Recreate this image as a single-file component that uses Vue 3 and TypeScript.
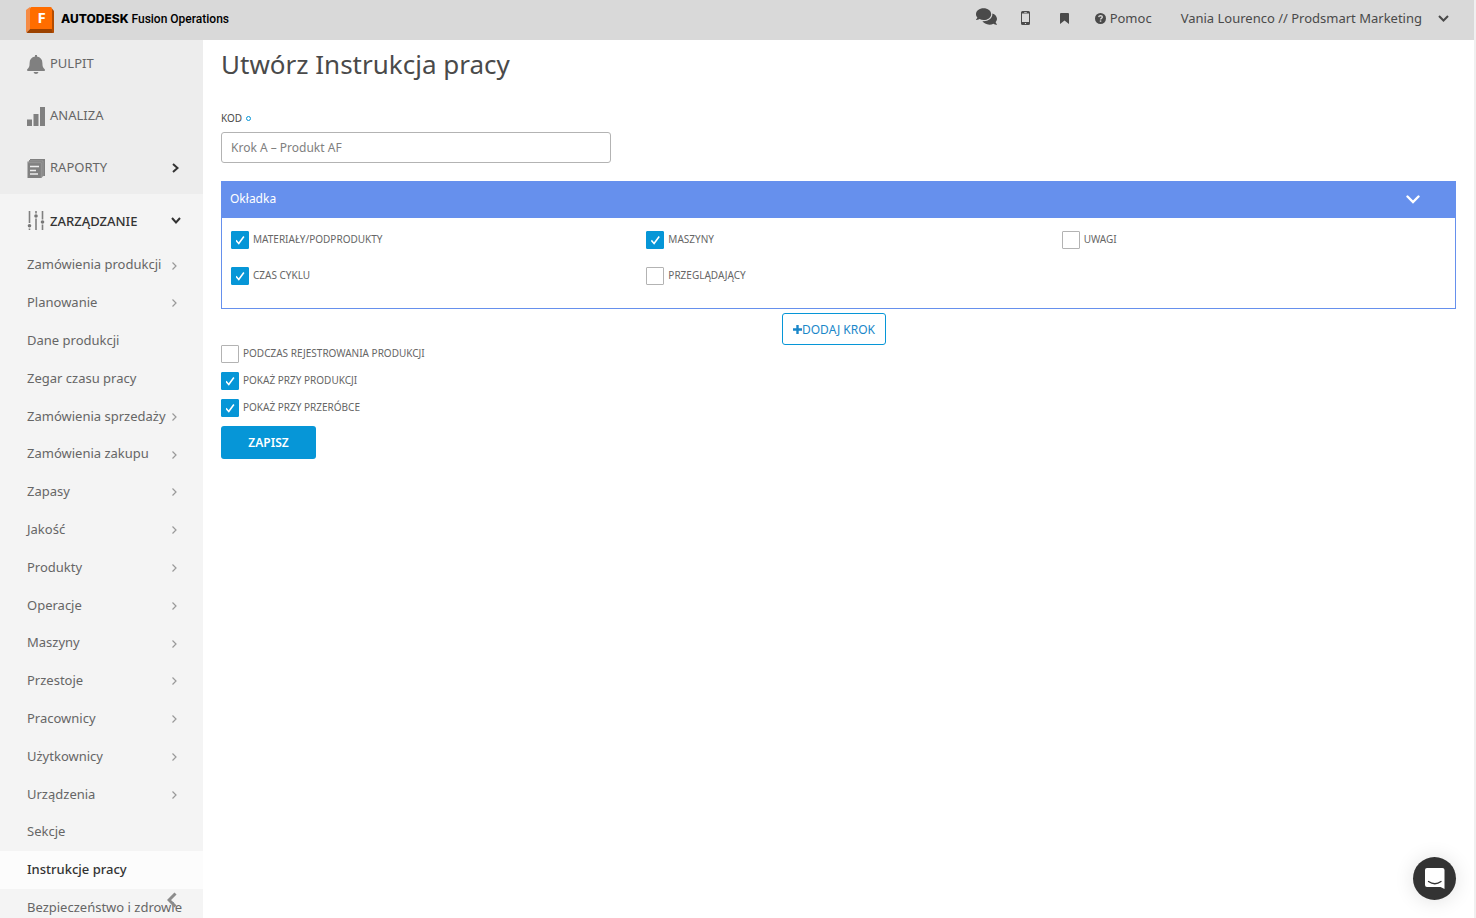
<script setup lang="ts">
import { ref } from 'vue'

interface MenuItem {
  label: string
  expandable: boolean
}

interface Option {
  id: string
  label: string
  checked: boolean
}

const menu: MenuItem[] = [
  { label: 'Zamówienia produkcji', expandable: true },
  { label: 'Planowanie', expandable: true },
  { label: 'Dane produkcji', expandable: false },
  { label: 'Zegar czasu pracy', expandable: false },
  { label: 'Zamówienia sprzedaży', expandable: true },
  { label: 'Zamówienia zakupu', expandable: true },
  { label: 'Zapasy', expandable: true },
  { label: 'Jakość', expandable: true },
  { label: 'Produkty', expandable: true },
  { label: 'Operacje', expandable: true },
  { label: 'Maszyny', expandable: true },
  { label: 'Przestoje', expandable: true },
  { label: 'Pracownicy', expandable: true },
  { label: 'Użytkownicy', expandable: true },
  { label: 'Urządzenia', expandable: true },
  { label: 'Sekcje', expandable: false },
  { label: 'Instrukcje pracy', expandable: false },
  { label: 'Bezpieczeństwo i zdrowie', expandable: false },
]
const activeItem = 'Instrukcje pracy'

const code = ref('Krok A – Produkt AF')
const coverOpen = ref(true)

const coverOptions = ref<Option[]>([
  { id: 'materials', label: 'MATERIAŁY/PODPRODUKTY', checked: true },
  { id: 'machines', label: 'MASZYNY', checked: true },
  { id: 'notes', label: 'UWAGI', checked: false },
  { id: 'cycle', label: 'CZAS CYKLU', checked: true },
  { id: 'reviewer', label: 'PRZEGLĄDAJĄCY', checked: false },
])

const displayOptions = ref<Option[]>([
  { id: 'recording', label: 'PODCZAS REJESTROWANIA PRODUKCJI', checked: false },
  { id: 'production', label: 'POKAŻ PRZY PRODUKCJI', checked: true },
  { id: 'rework', label: 'POKAŻ PRZY PRZERÓBCE', checked: true },
])
</script>

<template>
  <div class="app">
    <header class="topbar">
      <a class="brand" href="#">
        <svg class="logo" viewBox="0 0 28 27" aria-hidden="true">
          <path d="M0 3 4 0v22l-3.500 3.500Q0 25 0 24z" fill="#f58b45" />
          <path d="M4 22h22l2-18v20.500q0 1.500-1.500 1.500H3q-1.500 0-2.500-.5z" fill="#9c4200" />
          <path d="M26 1.500 28 4v20.500q0 1.500-1.500 1.500L25 21z" fill="#b44c00" />
          <path d="M4 1.500Q4 0 5.500 0h19Q26 0 26 1.500V22H4z" fill="#ff6d00" />
          <text x="15.500" y="16" text-anchor="middle" fill="#fff" class="logo-letter">F</text>
        </svg>
        <span class="brand-name"><b>AUTODESK</b> Fusion Operations</span>
      </a>
      <nav class="tools" aria-label="Narzędzia">
        <button class="tool chat" type="button" aria-label="Czat">
          <svg viewBox="0 32 576 448" width="21" height="17"><path fill="currentColor" d="M416 192c0-88.400-93.100-160-208-160S0 103.600 0 192c0 34.300 14.100 65.900 38 92-13.400 30.200-35.500 54.200-35.800 54.500-2.200 2.300-2.800 5.700-1.500 8.700S4.800 352 8 352c36.600 0 66.900-12.300 88.700-25 32.200 15.700 70.300 25 111.300 25 114.900 0 208-71.600 208-160zm122 220c23.900-26 38-57.700 38-92 0-66.900-53.500-124.200-129.300-148.100.9 6.600 1.300 13.300 1.300 20.100 0 105.900-107.700 192-240 192-10.800 0-21.300-.8-31.700-1.900C207.800 439.600 281.800 480 368 480c41 0 79.100-9.200 111.300-25 21.800 12.700 52.100 25 88.700 25 3.200 0 6.100-1.900 7.300-4.800 1.300-2.900.7-6.300-1.500-8.700-.3-.3-22.400-24.200-35.800-54.500z" /></svg>
        </button>
        <button class="tool phone" type="button" aria-label="Telefon">
          <svg viewBox="0 0 9 14" width="9" height="14"><path fill="currentColor" fill-rule="evenodd" d="M1.500 0h6Q9 0 9 1.500v11Q9 14 7.500 14h-6Q0 14 0 12.500v-11Q0 0 1.500 0zM1 2.500v8.500h7V2.500zM3.200 1v.7h2.600V1zM3.900 12v1h1.200v-1z" /></svg>
        </button>
        <button class="tool mark" type="button" aria-label="Zakładki">
          <svg viewBox="0 0 9 11" width="9" height="11"><path fill="currentColor" d="M1 0h7q1 0 1 1v10L4.500 7.500 0 11V1q0-1 1-1z" /></svg>
        </button>
        <a class="help" href="#">
          <svg viewBox="0 0 11 11" width="11" height="11" aria-hidden="true"><circle cx="5.500" cy="5.500" r="5.500" fill="currentColor" /><path d="M3.700 4.200Q3.900 2.600 5.600 2.600 7.300 2.700 7.300 4.100 7.300 4.900 6.400 5.400 5.600 5.800 5.600 6.600" fill="none" stroke="#d9d9d9" stroke-width="1.400" /><path d="M4.800 7.400h1.500v1.400H4.800z" fill="#d9d9d9" /></svg>
          Pomoc
        </a>
        <button class="account" type="button">
          Vania Lourenco // Prodsmart Marketing
          <svg viewBox="0 0 11 7" width="11" height="7" aria-hidden="true"><path d="M1 1l4.500 4.500L10 1" fill="none" stroke="currentColor" stroke-width="2" /></svg>
        </button>
      </nav>
    </header>

    <div class="body">
      <aside class="sidebar">
        <nav class="scroller" aria-label="Menu główne">
          <ul class="primary">
            <li>
              <a href="#" class="section">
                <svg viewBox="0 0 18 19" width="18" height="19" aria-hidden="true"><path fill="#808080" d="M8 0h2v1.600c3.500.6 5.400 3 5.400 6.400 0 3.500.6 4.600 2.100 6.100.9 1 .5 1.900-.6 1.900H1.100C0 16-.4 15.100.5 14.100 2 12.600 2.600 11.500 2.600 8c0-3.400 1.900-5.800 5.400-6.400zM6.500 17h5Q11 19 9 19T6.500 17z" /></svg>
                <span>PULPIT</span>
              </a>
            </li>
            <li>
              <a href="#" class="section">
                <svg viewBox="0 0 18 19" width="18" height="19" aria-hidden="true"><path fill="#808080" d="M0 12.500h5V19H0zM6.500 7h5v12h-5zM13 0h5v19h-5z" /></svg>
                <span>ANALIZA</span>
              </a>
            </li>
            <li>
              <a href="#" class="section">
                <svg viewBox="0 0 18 19" width="18" height="19" aria-hidden="true"><path d="M3 0H18V17H16L14.500 19H.5V2.500H2V1h1z" fill="#808080" /><path d="M.5 3.700H14.300V19M2.300 1.900H16V17.500" fill="none" stroke="#b0b0b0" stroke-width=".5" /><path d="M3 7.500h9M3 11.500h6M3 15h8" stroke="#ededed" stroke-width="1.500" /></svg>
                <span>RAPORTY</span>
                <svg class="arrow" viewBox="0 0 7 10" width="7" height="10" aria-hidden="true"><path d="M1 1l4.500 4L1 9" fill="none" stroke="#333" stroke-width="2" /></svg>
              </a>
            </li>
          </ul>
          <a href="#" class="section current" aria-expanded="true">
            <svg viewBox="0 0 18 19" width="18" height="19" aria-hidden="true"><path d="M2.500 0v12M2.500 17.500v1.500M9 0v2.500M9 7.500v11.500M15.500 0v8.500M15.500 13.500v5.500" stroke="#808080" stroke-width="1.600" /><g fill="#777"><circle cx="2.500" cy="14.800" r="1.800" /><circle cx="9" cy="5" r="1.800" /><circle cx="15.500" cy="11" r="1.800" /></g></svg>
            <span>ZARZĄDZANIE</span>
            <svg class="arrow" viewBox="0 0 10 7" width="10" height="7" aria-hidden="true"><path d="M1 1l4 4.500L9 1" fill="none" stroke="#333" stroke-width="2" /></svg>
          </a>
          <ul class="secondary">
            <li v-for="item in menu" :key="item.label">
              <a href="#" :class="{ active: item.label === activeItem }">
                <span>{{ item.label }}</span>
                <svg v-if="item.expandable" viewBox="0 0 5 8" width="5" height="8" aria-hidden="true"><path d="M.5.500 4 4 .5 7.500" fill="none" stroke="#999" stroke-width="1.200" /></svg>
              </a>
            </li>
          </ul>
        </nav>
        <button class="collapse" type="button" aria-label="Zwiń menu">
          <svg viewBox="0 0 10 16" width="10" height="16"><path d="M8.500 1.500 2 8l6.500 6.500" fill="none" stroke="#8c8c8c" stroke-width="3" /></svg>
        </button>
      </aside>

      <main class="content">
        <h1>Utwórz Instrukcja pracy</h1>
        <form @submit.prevent>
          <label class="field-label" for="code">KOD <i class="required"></i></label>
          <input id="code" v-model="code" class="text-input" type="text" />

          <section class="panel">
            <button class="panel-head" type="button" :aria-expanded="coverOpen" @click="coverOpen = !coverOpen">
              <span>Okładka</span>
              <svg viewBox="0 0 14 9" width="14" height="9" aria-hidden="true"><path d="M1.500 1.500 7 7l5.500-5.500" fill="none" stroke="#fff" stroke-width="2.400" stroke-linecap="round" /></svg>
            </button>
            <div v-if="coverOpen" class="panel-body">
              <label v-for="option in coverOptions" :key="option.id" class="check" :for="option.id">
                <input :id="option.id" v-model="option.checked" type="checkbox" />
                <span>{{ option.label }}</span>
              </label>
            </div>
          </section>

          <button class="add" type="button">
            <svg viewBox="0 0 9 9" width="9" height="9" aria-hidden="true"><path d="M4.500 0v9M0 4.500h9" stroke="currentColor" stroke-width="2.400" /></svg>DODAJ KROK
          </button>

          <div class="display-options">
            <label v-for="option in displayOptions" :key="option.id" class="check" :for="option.id">
              <input :id="option.id" v-model="option.checked" type="checkbox" />
              <span>{{ option.label }}</span>
            </label>
          </div>

          <button class="save" type="submit">ZAPISZ</button>
        </form>
      </main>
    </div>

    <button class="messenger" type="button" aria-label="Otwórz komunikator">
      <svg viewBox="0 0 20 21" width="20" height="21"><path fill="#fff" d="M2 0h15.500q2 0 2 2v19l-4-2H2q-2 0-2-2V2Q0 0 2 0z" /><path d="M3.500 13.500q6.500 4.500 12.500 0" fill="none" stroke="#333" stroke-width="1.300" stroke-linecap="round" /></svg>
    </button>
  </div>
</template>

<style>
body {
  margin: 0;
  background: #fff;
}
</style>

<style scoped>
.app {
  display: flex;
  flex-direction: column;
  box-sizing: border-box;
  height: 100vh;
  overflow: hidden;
  border-right: 2px solid #f0f0f0;
  color: #4a4a4a;
  font-family: "Noto Sans", "Open Sans", sans-serif;
  font-size: 12px;
}

a {
  color: inherit;
  text-decoration: none;
}

button {
  padding: 0;
  border: 0;
  background: none;
  color: inherit;
  font: inherit;
  cursor: pointer;
}

svg {
  display: block;
  flex: none;
}

ul {
  margin: 0;
  padding: 0;
  list-style: none;
}

.topbar {
  display: flex;
  flex: none;
  align-items: center;
  justify-content: space-between;
  box-sizing: border-box;
  height: 40px;
  padding: 0 25px 4px 26px;
  background: #d9d9d9;
}

.brand {
  display: flex;
  align-items: center;
  gap: 7px;
  color: #000;
}

.logo {
  width: 28px;
  height: 27px;
  margin-top: 4px;
}

.logo-letter {
  font-family: "Open Sans", sans-serif;
  font-size: 15px;
  font-weight: 700;
}

.brand-name {
  font-family: Roboto, sans-serif;
  font-size: 12px;
  font-weight: 500;
}

.brand-name b {
  font-family: Inter, sans-serif;
  font-weight: 800;
}

.tools {
  display: flex;
  align-items: center;
  font-size: 13px;
}

.chat {
  margin: 0 24px 4px 0;
}

.phone {
  margin-right: 30px;
}

.mark {
  margin-right: 26px;
}

.help {
  display: flex;
  align-items: center;
  gap: 4px;
  margin-right: 29px;
}

.account {
  display: flex;
  align-items: center;
  gap: 16px;
}

.body {
  display: flex;
  flex: 1;
  min-height: 0;
}

.sidebar {
  position: relative;
  flex: none;
  width: 203px;
  background: #f4f4f4;
  font-size: 13px;
}

.scroller {
  height: 100%;
  overflow: hidden;
}

.primary {
  display: grid;
  gap: 4px;
  padding-bottom: 2px;
  background: #ededed;
}

.section {
  display: flex;
  align-items: center;
  gap: 5px;
  height: 48px;
  padding: 0 24px 0 27px;
  color: #666;
}

.section span {
  flex: 1;
  padding-bottom: 2px;
}

.section.current {
  height: 53px;
  padding-right: 22px;
  color: #333;
  font-weight: 500;
}

.section.current span {
  padding-bottom: 0;
}

.secondary a {
  display: flex;
  align-items: center;
  justify-content: space-between;
  height: 38px;
  padding: 0 26px 0 27px;
  color: #666;
  white-space: nowrap;
}

.secondary span {
  padding-bottom: 3px;
}

.secondary li:nth-child(5n + 1) a {
  height: 37px;
}

.secondary a.active {
  background: #fcfcfc;
  color: #333;
  font-weight: 500;
}

.collapse {
  position: absolute;
  right: 26px;
  bottom: 10px;
}

.content {
  flex: 1;
  min-width: 0;
  padding: 7px 18px 0;
}

h1 {
  margin: 0 0 29px;
  font-size: 26px;
  font-weight: 400;
  line-height: 34px;
}

form {
  display: flex;
  flex-direction: column;
  align-items: flex-start;
}

.field-label {
  display: flex;
  align-items: center;
  gap: 4px;
  margin-bottom: 6px;
  font-size: 10px;
  line-height: 16px;
}

.required {
  box-sizing: border-box;
  width: 5px;
  height: 5px;
  border: 1px solid #0696d7;
  border-radius: 50%;
}

.text-input {
  box-sizing: border-box;
  width: 390px;
  max-width: 100%;
  height: 31px;
  padding: 0 9px;
  border: 1px solid #b3b3b3;
  border-radius: 3px;
  background: #fff;
  color: #808080;
  font: inherit;
}

.panel {
  box-sizing: border-box;
  align-self: stretch;
  margin: 18px 0 4px;
  border: 1px solid #6690ed;
}

.panel-head {
  display: flex;
  align-items: center;
  justify-content: space-between;
  box-sizing: border-box;
  width: 100%;
  height: 36px;
  padding: 0 35px 2px 8px;
  background: #6690ed;
  color: #fff;
}

.panel-head span {
  padding-bottom: 2px;
}

.panel-body {
  display: grid;
  grid-template-columns: repeat(3, 1fr);
  gap: 18px 31px;
  padding: 13px 9px 23px;
}

.check {
  display: flex;
  align-items: center;
  gap: 4px;
  height: 18px;
  color: #666;
  font-size: 10px;
}

.check span {
  margin-bottom: 2px;
}

.check input {
  display: flex;
  flex: none;
  justify-content: center;
  box-sizing: border-box;
  width: 18px;
  height: 18px;
  margin: 0;
  border: 1px solid #b3b3b3;
  border-radius: 1px;
  background: #fff;
  appearance: none;
}

.check input:checked {
  border-color: #0696d7;
  background: #0696d7;
}

.check input:checked::after {
  width: 9px;
  height: 9px;
  margin-top: 4px;
  background: #fff;
  clip-path: polygon(0 55%, 12% 43%, 35% 70%, 86% 0, 100% 10%, 37% 96%);
  content: "";
}

.add {
  display: flex;
  align-items: center;
  align-self: center;
  justify-content: center;
  box-sizing: border-box;
  height: 32px;
  margin-right: 9px;
  padding: 0 10px;
  border: 1px solid #0696d7;
  border-radius: 3px;
  color: #1a87c9;
}

.display-options {
  display: grid;
  gap: 9px;
  margin-bottom: 9px;
}

.save {
  width: 95px;
  height: 33px;
  border-radius: 3px;
  background: #0696d7;
  color: #fff;
  font-weight: 600;
}

.messenger {
  display: flex;
  position: fixed;
  right: 20px;
  bottom: 18px;
  align-items: center;
  justify-content: center;
  width: 43px;
  height: 43px;
  border-radius: 50%;
  background: #333;
  box-shadow: 0 1px 20px rgba(0, 0, 0, 0.12);
}
</style>
